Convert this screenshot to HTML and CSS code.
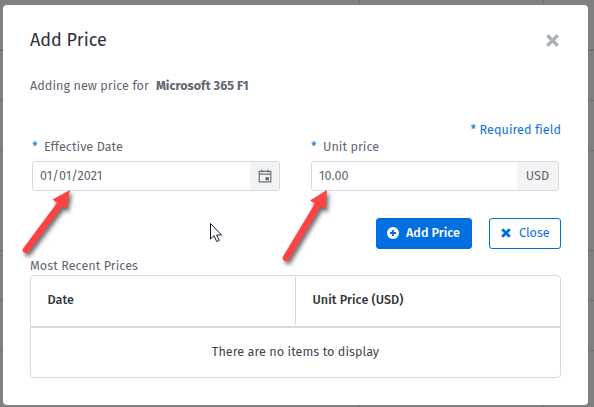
FILE: index.html
```html
<!DOCTYPE html>
<html lang="en">
<head>
<meta charset="utf-8">
<title>Add Price</title>
<link rel="stylesheet" href="styles.css">
</head>
<body>
<main class="modal">
  <header class="modal-header">
    <h1 class="title">Add Price</h1>
    <svg class="dismiss" viewBox="0 0 12 12"><path d="M2.3 2.3l7.4 7.4M9.7 2.3l-7.4 7.4"/></svg>
  </header>
  <p class="intro"><span class="intro-text">Adding new price for</span><strong class="product">Microsoft 365 F1</strong></p>
  <p class="required"><span>* Required field</span></p>
  <form class="fields">
    <div class="field">
      <label class="label"><span class="star">*</span><span class="label-date">Effective Date</span></label>
      <div class="control">
        <span class="value value-date">01/01/2021</span>
        <span class="addon addon-date">
          <svg class="calendar" viewBox="0 0 14 14"><path class="frame" d="M1.2 2.4h11.6v10.4H1.2zM1 5.2h12M4 0.5v3M10 0.5v3"/><path class="day" d="M7.5 8.2h3.5v3H7.5z"/></svg>
        </span>
      </div>
    </div>
    <div class="field">
      <label class="label"><span class="star">*</span><span class="label-price">Unit price</span></label>
      <div class="control">
        <span class="value value-price">10.00</span>
        <span class="addon addon-usd">USD</span>
      </div>
    </div>
  </form>
  <div class="actions">
    <button class="button primary"><svg class="plus" viewBox="0 0 12 12"><circle cx="6" cy="6" r="6"/><path d="M6 3v6M3 6h6"/></svg><span>Add Price</span></button>
    <button class="button secondary"><svg class="times" viewBox="0 0 10 10"><path d="M2.2 2.2l5.6 5.6M7.8 2.2l-5.6 5.6"/></svg><span>Close</span></button>
  </div>
  <h2 class="caption"><span>Most Recent Prices</span></h2>
  <section class="table">
    <div class="head">
      <div class="th"><span class="th-date">Date</span></div>
      <div class="th"><span class="th-price">Unit Price (USD)</span></div>
    </div>
    <div class="empty"><span>There are no items to display</span></div>
  </section>
</main>
<svg class="annotations" viewBox="0 0 594 407">
  <g class="arrow">
    <path class="head-shape" d="M70 190L52.5 199.5L66.5 209.5z"/><path class="shaft" d="M26 250L61 203"/>
    <path class="head-shape" d="M327 190L310 200.5L325.5 209.5z"/><path class="shaft" d="M286 258L319 203"/>
  </g>
  <path class="cursor" d="M210.5 223.5v15.5l3.5-3.3 2.7 5.8 2.6-1.1-2.7-5.4h4.9z"/>
</svg>
</body>
</html>
```

FILE: styles.css
```css
* { box-sizing: border-box; }
body {
  margin: 0;
  width: 594px;
  height: 407px;
  overflow: hidden;
  padding: 5px 6px 2px 3px;
  font: 12.6px/20px "Fira Sans", "Noto Sans", sans-serif;
  letter-spacing: 0.05px;
  color: #5f6672;
  background:
    linear-gradient(#6b7074, #6b7074) 0 49px / 100% 2px no-repeat,
    linear-gradient(#707172, #707172) 359px 0 / 1px 100% no-repeat,
    linear-gradient(#707172, #707172) 543px 0 / 1px 100% no-repeat,
    repeating-linear-gradient(#808080 0 50px, #6d7072 50px 51px, #808080 51px 100px, #6d7072 100px 101px, #808080 101px 150px, #6d7072 150px 151px, #808080 151px 200px);
}
.modal {
  width: 585px;
  height: 400px;
  padding: 0 27px;
  background: #fff;
  border-radius: 4px;
}
.modal-header {
  display: flex;
  justify-content: space-between;
  align-items: center;
  height: 70px;
  padding-right: 2px;
}
.title { margin: 0; font-size: 18px; font-weight: 400; color: #2d3138; letter-spacing: 0; }
.dismiss { width: 13px; height: 13px; margin-top: 1px; }
.dismiss path { stroke: #a7b4bb; stroke-width: 3.2; stroke-linecap: square; }
.intro { display: flex; align-items: center; gap: 7px; height: 20px; margin: 1px 0 0; }
.product { font-weight: 700; letter-spacing: 0.04px; }
.required { display: flex; justify-content: flex-end; height: 20px; margin: 24px 0 0; color: #0a73dc; }
.fields { display: flex; gap: 31px; margin: -3px 0 0 2px; }
.field { width: 248px; }
.label { display: flex; gap: 7px; height: 20px; }
.star { width: 5px; color: #0a73dc; }
.control {
  display: flex;
  height: 30px;
  margin-top: 4px;
  overflow: hidden;
  border: 1px solid #d5dbdf;
  border-radius: 3px;
}
.value { flex: 1; padding-left: 7px; line-height: 28px; }
.value-date { letter-spacing: 0.1px; }
.addon { display: flex; align-items: center; justify-content: center; background: #f2f4f5; }
.addon-date { width: 29px; }
.addon-usd { width: 41px; background: #f4f4f4; }
.calendar { width: 14px; height: 14px; }
.frame { fill: none; stroke: #6c6f73; stroke-width: 1.2; }
.day { fill: #5e6165; }
.actions { display: flex; justify-content: flex-end; gap: 17px; margin-top: 27px; }
.button {
  display: flex;
  align-items: center;
  height: 31px;
  padding: 0 0 2px 11px;
  border: 1px solid #0070e0;
  border-radius: 3px;
  font: 12.6px/20px "Fira Sans", "Noto Sans", sans-serif;
  white-space: nowrap;
}
.primary { width: 96px; gap: 7px; padding-left: 10px; background: #0070e0; color: #fff; font-weight: 500; }
.secondary { width: 72px; gap: 8px; background: #fff; color: #0a73dc; }
.plus { width: 12px; height: 12px; flex: none; fill: #fff; }
.plus path { stroke: #0070e0; stroke-width: 1.8; }
.times { width: 10px; height: 10px; flex: none; }
.times path { stroke: #0070e0; stroke-width: 2.9; stroke-linecap: square; }
.caption { height: 20px; margin: 7px 0 0; font-size: 12.6px; font-weight: 400; }
.table { height: 103px; margin-top: -1px; border: 1px solid #d5dbdf; border-radius: 4px; color: #43474d; }
.head { display: flex; height: 52px; border-bottom: 2px solid #d5dbdf; font-weight: 500; color: #343840; }
.th { width: 264px; height: 49px; padding-left: 16.5px; line-height: 48px; }
.th + .th { border-left: 1px solid #d5dbdf; }
.empty { text-align: center; line-height: 48px; }
.annotations { position: absolute; inset: 0; width: 594px; height: 407px; }
.arrow { filter: drop-shadow(2px 3px 2px rgba(0, 0, 0, .6)); }
.head-shape { fill: #ff4343; }
.shaft { stroke: #ff4343; stroke-width: 6.5; stroke-linecap: round; }
.cursor { fill: #fff; stroke: #171725; stroke-width: 1; }
```
